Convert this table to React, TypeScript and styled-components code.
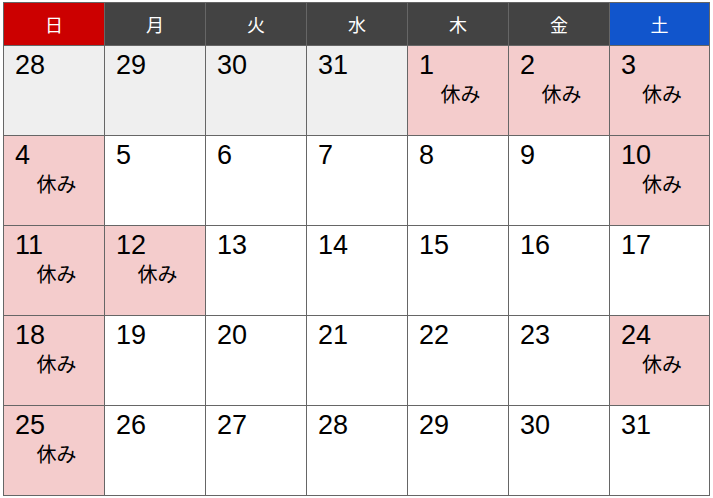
import { createGlobalStyle } from "styled-components";
import styled from "styled-components";

const GlobalStyle = createGlobalStyle`
  html, body {
    margin: 0;
    background: #fff;
  }
  body {
    padding: 2px 3px;
    font-family: "Liberation Sans", Arial, "Noto Sans CJK JP", sans-serif;
  }
`;

const Grid = styled.div`
  display: grid;
  grid-template-columns: repeat(6, 100px) 99px;
  grid-template-rows: 42px repeat(5, 89px);
  gap: 1px;
  width: max-content;
  background: #666666;
  border: 1px solid #666666;
`;

type HeadTone = "sun" | "sat" | "week";

const headColors: Record<HeadTone, string> = {
  sun: "#cc0000",
  sat: "#1155cc",
  week: "#434343",
};

const HeadCell = styled.div<{ $tone: HeadTone }>`
  display: flex;
  align-items: center;
  justify-content: center;
  background: ${(p) => headColors[p.$tone]};
  color: #ffffff;
  font-family: "Noto Sans CJK JP", sans-serif;
  font-size: 18px;
  line-height: 1;
`;

type DayKind = "past" | "off" | "normal";

const dayBg: Record<DayKind, string> = {
  past: "#efefef",
  off: "#f4cccc",
  normal: "#ffffff",
};

const DayCell = styled.div<{ $kind: DayKind }>`
  display: flex;
  flex-direction: column;
  padding: 6px 0 0 11px;
  background: ${(p) => dayBg[p.$kind]};
  color: #000;
`;

const DayNum = styled.span`
  font-family: "Liberation Sans", Arial, sans-serif;
  font-size: 27px;
  line-height: 27px;
`;

const OffLabel = styled.span`
  margin-top: 5px;
  padding-right: 6px;
  text-align: center;
  font-family: "Noto Sans CJK JP", sans-serif;
  font-size: 20px;
  line-height: 20px;
`;

const heads: { label: string; tone: HeadTone }[] = [
  { label: "日", tone: "sun" },
  { label: "月", tone: "week" },
  { label: "火", tone: "week" },
  { label: "水", tone: "week" },
  { label: "木", tone: "week" },
  { label: "金", tone: "week" },
  { label: "土", tone: "sat" },
];

const offDays = [1, 2, 3, 4, 10, 11, 12, 18, 24, 25];

const days: { n: number; kind: DayKind }[] = [
  ...[28, 29, 30, 31].map((n) => ({ n, kind: "past" as DayKind })),
  ...Array.from({ length: 31 }, (_, i) => i + 1).map((n) => ({
    n,
    kind: (offDays.includes(n) ? "off" : "normal") as DayKind,
  })),
];

export default function App() {
  return (
    <>
      <GlobalStyle />
      <Grid>
        {heads.map((h) => (
          <HeadCell key={h.label} $tone={h.tone}>
            {h.label}
          </HeadCell>
        ))}
        {days.map((d, i) => (
          <DayCell key={i} $kind={d.kind}>
            <DayNum>{d.n}</DayNum>
            {d.kind === "off" && <OffLabel>休み</OffLabel>}
          </DayCell>
        ))}
      </Grid>
    </>
  );
}
